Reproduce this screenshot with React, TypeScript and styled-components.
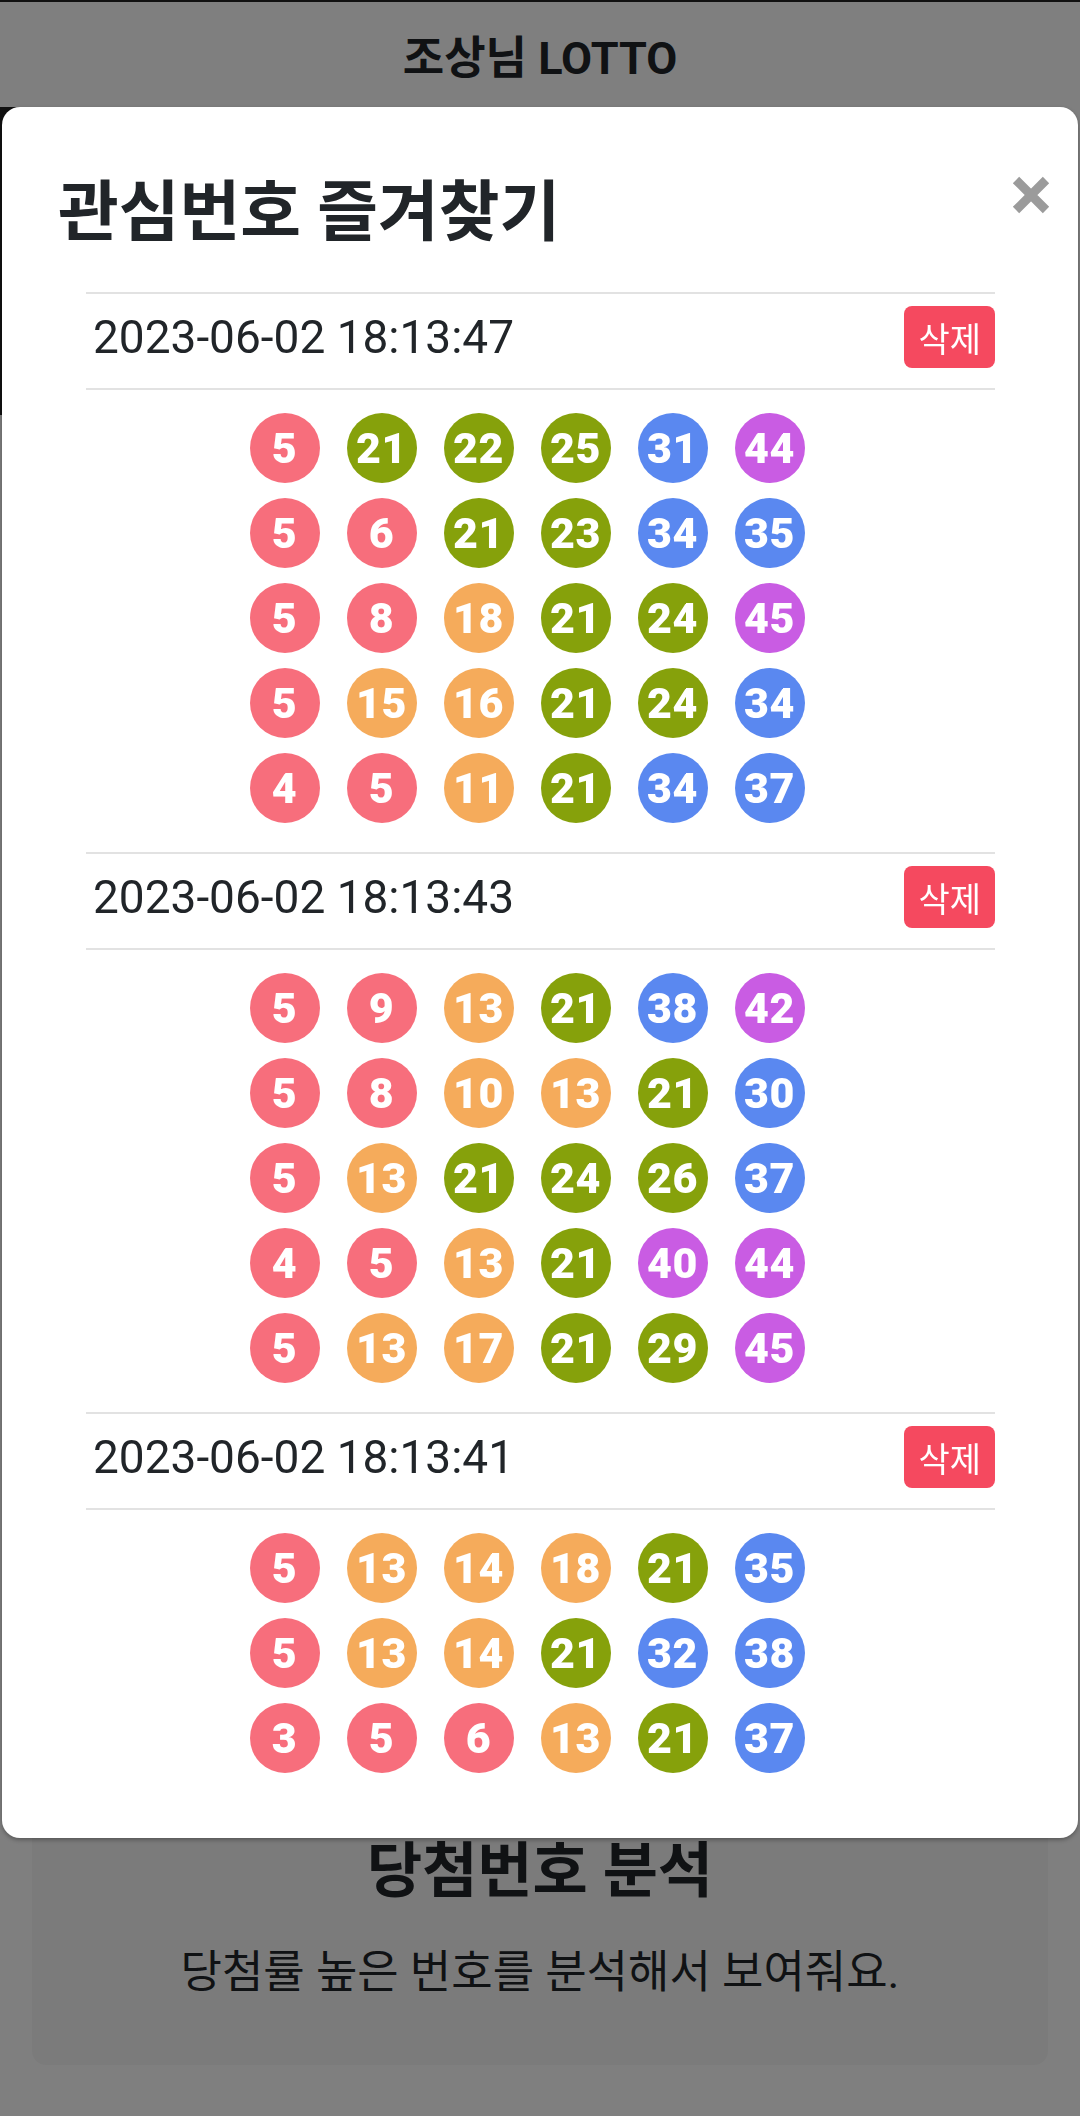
import React from "react";
import styled, { createGlobalStyle } from "styled-components";

const GlobalStyle = createGlobalStyle`
    * {
        box-sizing: border-box;
    }

    body {
        margin: 0;
        background: #fff;
        font-family: Roboto, "Noto Sans CJK KR", sans-serif;
        color: #212529;
    }
`;

const Page = styled.div`
    position: relative;
    display: flex;
    flex-direction: column;
    height: 2116px;
    border-top: 2px solid #222;
    overflow: hidden;
`;

const TopBar = styled.header`
    display: flex;
    align-items: center;
    justify-content: center;
    height: 105px;
`;

const BrandTitle = styled.h1`
    margin: 0;
    font-size: 45px;
    font-weight: 700;
    color: #212529;
`;

const Banner = styled.div`
    height: 308px;
    margin-right: 40px;
    background: #222;
`;

const AnalysisCard = styled.section`
    margin: auto 32px 51px;
    padding: 40px 24px 59px;
    border-radius: 14px;
    background: #f7f7f7;
    text-align: center;
`;

const AnalysisTitle = styled.h2`
    margin: 0 0 31px;
    font-size: 60px;
    line-height: 1.2;
    font-weight: 700;
    color: #212529;
`;

const AnalysisText = styled.p`
    margin: 0;
    font-size: 45px;
    line-height: 1.5;
    color: #212529;
`;

const Backdrop = styled.div`
    position: fixed;
    inset: 0;
    background: rgba(0, 0, 0, 0.5);
`;

const Modal = styled.div`
    position: absolute;
    top: 105px;
    left: 2px;
    right: 2px;
    background: #fff;
    border-radius: 18px;
    box-shadow: 0 2px 4px rgba(0, 0, 0, 0.3);
`;

const ModalHeader = styled.div`
    display: flex;
    align-items: flex-start;
    justify-content: space-between;
    padding: 66px 28px 0 56px;
`;

const ModalTitle = styled.h2`
    margin: 0;
    font-size: 66px;
    line-height: 80px;
    font-weight: 700;
    color: #212529;
`;

const CloseButton = styled.button`
    display: flex;
    margin-top: 3px;
    padding: 0;
    border: 0;
    background: none;
    cursor: pointer;
`;

const ModalBody = styled.div`
    padding: 39px 83px 36px 84px;
`;

const SetHeader = styled.div`
    display: flex;
    align-items: center;
    justify-content: space-between;
    padding: 12px 0 20px 7px;
    border-top: 2px solid #e2e2e2;
    border-bottom: 2px solid #e2e2e2;
`;

const SetDate = styled.span`
    font-size: 46px;
    line-height: 62px;
    color: #212529;
`;

const DeleteButton = styled.button`
    height: 62px;
    padding: 0 14px;
    border: 0;
    border-radius: 8px;
    background: #f5495f;
    color: #fff;
    font-family: Roboto, "Noto Sans CJK KR", sans-serif;
    font-size: 34px;
    cursor: pointer;
`;

const BallList = styled.div`
    display: flex;
    flex-direction: column;
    gap: 15px;
    padding: 23px 0 29px;
`;

const BallRow = styled.div`
    display: flex;
    justify-content: center;
`;

const Ball = styled.span<{ color: string }>`
    display: flex;
    align-items: center;
    justify-content: center;
    width: 70px;
    height: 70px;
    margin-right: 27px;
    border-radius: 50%;
    background: ${p => p.color};
    color: #fff;
    font-size: 43px;
    font-weight: 900;
    letter-spacing: 0.5px;
`;

const ballColor = (n: number) => {
    if (n < 10) return "#f76e7c";
    if (n < 20) return "#f5ab5b";
    if (n < 30) return "#86a10b";
    if (n < 40) return "#5a88f0";
    return "#c95ce3";
};

const favourites = [
    {
        date: "2023-06-02 18:13:47",
        rows: [
            [5, 21, 22, 25, 31, 44],
            [5, 6, 21, 23, 34, 35],
            [5, 8, 18, 21, 24, 45],
            [5, 15, 16, 21, 24, 34],
            [4, 5, 11, 21, 34, 37],
        ],
    },
    {
        date: "2023-06-02 18:13:43",
        rows: [
            [5, 9, 13, 21, 38, 42],
            [5, 8, 10, 13, 21, 30],
            [5, 13, 21, 24, 26, 37],
            [4, 5, 13, 21, 40, 44],
            [5, 13, 17, 21, 29, 45],
        ],
    },
    {
        date: "2023-06-02 18:13:41",
        rows: [
            [5, 13, 14, 18, 21, 35],
            [5, 13, 14, 21, 32, 38],
            [3, 5, 6, 13, 21, 37],
        ],
    },
];

const CloseIcon = () => (
    <svg width="38" height="38" viewBox="0 0 38 38">
        <path d="M4 4L34 34M34 4L4 34" stroke="#9b9b9b" strokeWidth="9" fill="none" />
    </svg>
);

export default function App() {
    return (
        <>
            <GlobalStyle />
            <Page>
                <TopBar>
                    <BrandTitle>조상님 LOTTO</BrandTitle>
                </TopBar>
                <Banner />
                <AnalysisCard>
                    <AnalysisTitle>당첨번호 분석</AnalysisTitle>
                    <AnalysisText>당첨률 높은 번호를 분석해서 보여줘요.</AnalysisText>
                </AnalysisCard>
                <Backdrop />
                <Modal>
                    <ModalHeader>
                        <ModalTitle>관심번호 즐겨찾기</ModalTitle>
                        <CloseButton aria-label="닫기">
                            <CloseIcon />
                        </CloseButton>
                    </ModalHeader>
                    <ModalBody>
                        {favourites.map(set => (
                            <div key={set.date}>
                                <SetHeader>
                                    <SetDate>{set.date}</SetDate>
                                    <DeleteButton>삭제</DeleteButton>
                                </SetHeader>
                                <BallList>
                                    {set.rows.map((row, i) => (
                                        <BallRow key={i}>
                                            {row.map(n => (
                                                <Ball key={n} color={ballColor(n)}>
                                                    {n}
                                                </Ball>
                                            ))}
                                        </BallRow>
                                    ))}
                                </BallList>
                            </div>
                        ))}
                    </ModalBody>
                </Modal>
            </Page>
        </>
    );
}
